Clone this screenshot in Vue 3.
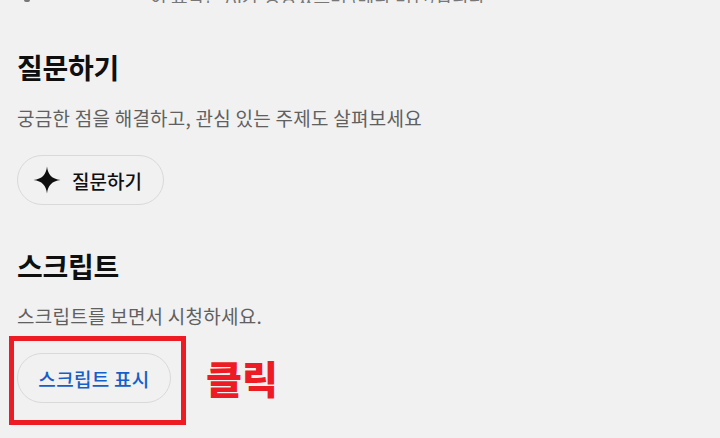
<script setup>
const sections = [
  { title: '질문하기', desc: '궁금한 점을 해결하고, 관심 있는 주제도 살펴보세요' },
  { title: '스크립트', desc: '스크립트를 보면서 시청하세요.' },
]
</script>

<template>
  <div class="page">
    <div class="clipped">
      <span class="mark"></span>
      <span class="lead">이 요약은 AI가 생성했으며 (베타 버전)입니다</span>
    </div>

    <section class="sec ask">
      <h2>{{ sections[0].title }}</h2>
      <p>{{ sections[0].desc }}</p>
      <button class="pill ask-btn" type="button">
        <svg class="spark" width="28" height="28" viewBox="0 0 28 28" aria-hidden="true">
          <path d="M14 0.5 C14.8 8.5 19 13 27.5 14 C19 15 14.8 19.5 14 27.5 C13.2 19.5 9 15 0.5 14 C9 13 13.2 8.5 14 0.5 Z" fill="#0f0f0f" />
        </svg>
        <span>질문하기</span>
      </button>
    </section>

    <section class="sec script">
      <h2>{{ sections[1].title }}</h2>
      <p>{{ sections[1].desc }}</p>
      <div class="action">
        <div class="callout">
          <button class="pill script-btn" type="button">스크립트 표시</button>
        </div>
        <strong class="click">클릭</strong>
      </div>
    </section>
  </div>
</template>

<style>
html, body { margin: 0; background: #f1f1f1; }
</style>

<style scoped>
.page {
  width: 720px;
  height: 438px;
  overflow: hidden;
  background: #f1f1f1;
  color: #0f0f0f;
  font-family: "Noto Sans CJK KR", "Noto Sans", sans-serif;
  box-sizing: border-box;
}
.clipped {
  height: 3px;
  overflow: hidden;
  display: flex;
  align-items: flex-end;
  padding-left: 24px;
  gap: 120px;
}
.mark {
  flex: none;
  width: 6px;
  height: 2px;
  margin-bottom: 1px;
  border-radius: 0 0 3px 3px;
  background: #777;
}
.lead {
  display: block;
  flex: none;
  margin-bottom: -5px;
  font-size: 18px;
  line-height: 24px;
  letter-spacing: 0.2px;
  color: #777;
  white-space: nowrap;
}
.sec { padding-left: 17px; }
.ask { padding-top: 44px; }
.script { padding-top: 41px; }
h2 {
  margin: 0;
  font-size: 28px;
  line-height: 40px;
  font-weight: 700;
  letter-spacing: -0.3px;
}
p {
  margin: 17px 0 0;
  font-size: 19px;
  line-height: 26px;
  color: #606060;
  letter-spacing: 0.25px;
}
.ask p { margin-top: 18px; }
.pill {
  box-sizing: border-box;
  display: flex;
  align-items: center;
  height: 50px;
  border: 1px solid #d9d9d9;
  border-radius: 25px;
  background: transparent;
  font-family: inherit;
  font-size: 19px;
  font-weight: 500;
  padding: 0;
}
.ask-btn {
  margin-top: 24px;
  width: 147px;
  padding-left: 15px;
  gap: 11px;
  color: #0f0f0f;
}
.spark { flex: none; }
.action {
  display: flex;
  align-items: center;
  margin-top: 7px;
  margin-left: -8px;
  gap: 20px;
}
.callout {
  box-sizing: border-box;
  width: 177px;
  height: 89px;
  border: 5px solid #ed1c24;
  padding: 12px 0 0 3px;
}
.script-btn {
  width: 154px;
  justify-content: center;
  color: #1560c8;
  letter-spacing: 0.3px;
}
.click {
  color: #ed1c24;
  font-size: 39px;
  line-height: 50px;
  font-weight: 900;
  margin-top: -7px;
}
</style>
